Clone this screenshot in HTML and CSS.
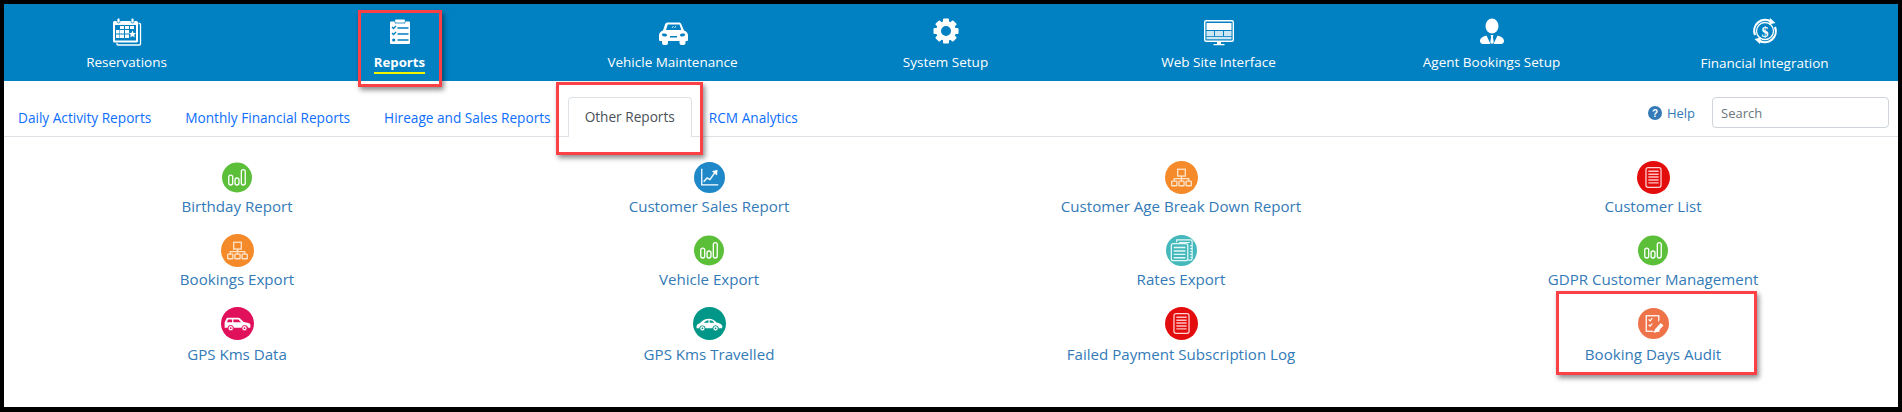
FILE: index.html
```html
<!DOCTYPE html>
<html lang="en">
<head>
<meta charset="utf-8">
<title>Other Reports</title>
<link rel="stylesheet" href="styles.css">
</head>
<body>
<svg class="defs" width="0" height="0" aria-hidden="true">
  <symbol id="i-bars" viewBox="0 0 32 32">
    <circle cx="16" cy="16" r="16" fill="#5bbf3a"/>
    <g fill="none" stroke="#fff" stroke-width="1.400">
      <rect x="7.200" y="13.500" width="4.200" height="10.500" rx="2.100"/>
      <rect x="13.900" y="16.500" width="4.200" height="7.500" rx="2.100"/>
      <rect x="20.600" y="7.500" width="4.200" height="16.500" rx="2.100"/>
    </g>
  </symbol>
  <symbol id="i-org" viewBox="0 0 32 32">
    <circle cx="16" cy="16" r="16" fill="#f58a2b"/>
    <g fill="none" stroke="#fde3c8" stroke-width="1.300">
      <rect x="12.300" y="8" width="7.400" height="6.600"/>
      <rect x="6.500" y="19.500" width="5" height="4.500" rx=".6"/>
      <rect x="13.500" y="19.500" width="5" height="4.500" rx=".6"/>
      <rect x="20.500" y="19.500" width="5" height="4.500" rx=".6"/>
      <path d="M16 14.600v4.900M9 19.500v-2.400h14v2.400"/>
    </g>
  </symbol>
  <symbol id="i-suv" viewBox="0 0 32 32">
    <circle cx="16" cy="16" r="16" fill="#e0105a"/>
    <path fill="#fff" d="M3.500 20v-5l1.800-3.800c.2-.5.600-.7 1.200-.7h10.300c.7 0 1.200.2 1.700.7l3.500 3.300 4.600 1c1 .2 1.900 1 1.900 2V20h-2.200a3.200 3.200 0 0 0-6.200 0H12.500a3.200 3.200 0 0 0-6.200 0z"/>
    <path fill="#e0105a" d="M6.800 12h4v2.800H5.800zM12 12h4.800l2.800 2.800H12z"/>
    <g fill="#fff" stroke="#e0105a" stroke-width=".8"><circle cx="9.400" cy="20.500" r="2.500"/><circle cx="22.800" cy="20.500" r="2.500"/></g>
    <g fill="#e0105a"><circle cx="9.400" cy="20.500" r=".9"/><circle cx="22.800" cy="20.500" r=".9"/></g>
  </symbol>
  <symbol id="i-chart" viewBox="0 0 32 32">
    <circle cx="16" cy="16" r="16" fill="#1f88c9"/>
    <path fill="none" stroke="#fff" stroke-width="1.300" d="M8 7v16.500h17"/>
    <path fill="none" stroke="#e8f4fb" stroke-width="1.600" d="M10 20.500l3.500-4 3 1.500 5-7"/>
    <path fill="#fff" d="M18.500 9.500l5.800-1.500-.5 6z"/>
  </symbol>
  <symbol id="i-car" viewBox="0 0 32 32">
    <circle cx="16" cy="16" r="16" fill="#009688"/>
    <path fill="#fff" d="M3.500 20.500c-.5-2.500.5-4 3-4.800 3-2.700 5.500-4.200 9-4.200 3 0 5.200 1.200 7.300 3.500 2.700.3 5 1.500 5.700 3.500l-.3 2H25a3.200 3.200 0 0 0-6.200 0h-6.600a3.200 3.200 0 0 0-6.200 0z"/>
    <path fill="#009688" d="M10.500 15.300c1.500-1.500 2.800-2.200 4.500-2.400v2.400zM16.200 12.900c2 0 3.300.8 4.500 2.400h-4.500z"/>
    <g fill="#fff" stroke="#009688" stroke-width=".8"><circle cx="9.100" cy="20.700" r="2.500"/><circle cx="21.900" cy="20.700" r="2.500"/></g>
    <g fill="#009688"><circle cx="9.100" cy="20.700" r=".9"/><circle cx="21.900" cy="20.700" r=".9"/></g>
  </symbol>
  <symbol id="i-rates" viewBox="0 0 32 32">
    <circle cx="16" cy="16" r="16" fill="#44b8bb"/>
    <path fill="none" stroke="#e6f7f7" stroke-width="1.200" d="M11 7.500V5h14a2 2 0 0 1 2 2v17a2 2 0 0 1-2 2h-2"/>
    <path stroke="#e6f7f7" stroke-width="1.200" d="M13.500 7.700h11M25 11h2M25 14h2M25 17h2M25 20h2M25 23h2"/>
    <rect x="5.500" y="9" width="17" height="17.500" rx="2" fill="#44b8bb" stroke="#e6f7f7" stroke-width="1.300"/>
    <path stroke="#e6f7f7" stroke-width="1.500" d="M8 13h12M8 16.500h12M8 20h12M8 23.500h12"/>
  </symbol>
  <symbol id="i-list" viewBox="0 0 32 32">
    <circle cx="16" cy="16" r="16" fill="#e30d0d"/>
    <rect x="8.700" y="6.500" width="14.600" height="19" rx="2" fill="none" stroke="#ffd5d5" stroke-width="1.200"/>
    <path stroke="#ffc0c0" stroke-width="1.400" d="M11 10h10M11 12.800h10M11 15.600h10M11 18.400h10M11 21.200h10"/>
  </symbol>
  <symbol id="i-audit" viewBox="0 0 32 32">
    <circle cx="16" cy="16" r="16" fill="#ef7349"/>
    <rect x="8.500" y="8" width="13" height="16" fill="none" stroke="#fff" stroke-width="1.300"/>
    <path fill="none" stroke="#fff" stroke-width="1.200" d="M11 11.800l1.500 1.500 2.300-2.800M11 17.300l1.500 1.500 2.300-2.800"/>
    <path fill="#ef7349" d="M16 19l7-7 4 4-7 8h-5z"/>
    <path fill="#fff" d="M17.500 22l6-6.500 2.800 2.500-6 6.500-3.800 1.200z"/>
  </symbol>
</svg>

<div class="frame">
  <nav class="topnav">
    <div class="topgrid">
      <a class="topitem">
        <svg class="topicon" viewBox="0 0 32 32">
          <path fill="none" stroke="#fff" stroke-width="1.300" d="M27.500 7.500h1a1 1 0 0 1 1 1V28a1 1 0 0 1-1 1H7a1 1 0 0 1-1-1v-1"/>
          <rect x="2" y="5" width="25" height="21.500" rx="1.500" fill="#fff"/>
          <rect x="4" y="9" width="21" height="15.500" fill="#0180c2"/>
          <g fill="#fff"><rect x="9" y="10" width="4" height="3"/><rect x="14" y="10" width="4" height="3"/><rect x="19" y="10" width="4" height="3"/><rect x="5" y="14" width="3.500" height="3.500"/><rect x="9" y="14" width="4" height="3.500"/><rect x="14" y="14" width="4" height="3.500"/><rect x="5" y="18.500" width="3.500" height="3.500"/><rect x="9" y="18.500" width="4" height="3.500"/><rect x="14" y="18.500" width="4" height="3.500"/><path d="M21.500 14.500l1.100 2.400 2.400.2-1.800 1.700.6 2.600-2.300-1.300-2.300 1.300.6-2.600-1.800-1.700 2.400-.2z"/></g>
          <g fill="#fff" stroke="#0180c2" stroke-width=".8"><rect x="6" y="2" width="3" height="5" rx="1.500"/><rect x="20" y="2" width="3" height="5" rx="1.500"/></g>
        </svg>
        <span class="toplabel">Reservations</span>
      </a>
      <a class="topitem active">
        <svg class="topicon" viewBox="0 0 32 32">
          <path fill="#fff" d="M6 6.500a1 1 0 0 1 1-1h4V4.500a1 1 0 0 1 1-1h8a1 1 0 0 1 1 1v1h4a1 1 0 0 1 1 1V27a1 1 0 0 1-1 1H7a1 1 0 0 1-1-1z"/>
          <path fill="none" stroke="#0180c2" stroke-width=".8" d="M11 5.500v1.500h10V5.500"/>
          <path fill="none" stroke="#0180c2" stroke-width="1.300" d="M8 11l1.500 1.500L12 10M8 17l1.500 1.500L12 16"/>
          <path stroke="#0180c2" stroke-width="1.300" d="M13.500 12h11M13.500 18h11M13.500 24h11"/>
          <circle cx="9.700" cy="24" r="1.600" fill="#0180c2"/>
        </svg>
        <span class="toplabel">Reports</span>
      </a>
      <a class="topitem">
        <svg class="topicon" viewBox="0 0 32 32">
          <path fill="#fff" fill-rule="evenodd" d="M8 8.500C8.600 7 9.500 6.500 11 6.500h10.500c1.500 0 2.400.5 3 2L27 14.500c2.500 1 4 2.500 4 5v4.500a1 1 0 0 1-1 1h-1.500V27a2 2 0 0 1-2 2h-2a2 2 0 0 1-2-2v-2H11V27a2 2 0 0 1-2 2H7a2 2 0 0 1-2-2v-2H3a1 1 0 0 1-1-1v-4.500c0-2.500 1.500-4 4-5zM10.800 8.500L9 14h15.300l-1.800-5.500zM5 18.500c0 1 1 2 2.500 2s2.500-.5 2.500-1.500-1.500-1.500-3-1.500-2 0-2 1zm23 0c0-1-.5-1-2-1s-3 .5-3 1.500 1 1.500 2.500 1.500 2.500-1 2.500-2zM13 20h7v1.500h-7z"/>
          <path stroke="#fff" stroke-width=".8" d="M15 12l1.500-2M17.500 12l1.500-2"/>
        </svg>
        <span class="toplabel">Vehicle Maintenance</span>
      </a>
      <a class="topitem">
        <svg class="topicon" viewBox="0 0 32 32">
          <circle cx="16" cy="15" r="7.500" fill="none" stroke="#fff" stroke-width="5"/>
          <g fill="#fff">
            <rect x="13" y="2.500" width="6" height="5" rx="1"/>
            <rect x="13" y="22.500" width="6" height="5" rx="1"/>
            <rect x="3.500" y="12" width="5" height="6" rx="1"/>
            <rect x="23.500" y="12" width="5" height="6" rx="1"/>
            <rect x="13" y="2.500" width="6" height="5" rx="1" transform="rotate(45 16 15)"/>
            <rect x="13" y="2.500" width="6" height="5" rx="1" transform="rotate(135 16 15)"/>
            <rect x="13" y="2.500" width="6" height="5" rx="1" transform="rotate(225 16 15)"/>
            <rect x="13" y="2.500" width="6" height="5" rx="1" transform="rotate(315 16 15)"/>
          </g>
        </svg>
        <span class="toplabel">System Setup</span>
      </a>
      <a class="topitem">
        <svg class="topicon" viewBox="0 0 32 32">
          <rect x="1.700" y="4.700" width="28.600" height="20.600" rx="1.500" fill="none" stroke="#fff" stroke-width="1.400"/>
          <rect x="3.500" y="7" width="25" height="7" fill="#fff"/>
          <g fill="#cfe6f3"><rect x="3.500" y="15" width="7.500" height="5"/><rect x="12" y="15" width="8" height="5"/><rect x="21" y="15" width="7.500" height="5"/><rect x="3.500" y="20.800" width="25" height="2.500"/></g>
          <path fill="#fff" d="M14 25.500h4v2.500h3.500v1.200h-11V28H14z"/>
        </svg>
        <span class="toplabel">Web Site Interface</span>
      </a>
      <a class="topitem">
        <svg class="topicon" viewBox="0 0 32 32">
          <ellipse cx="16" cy="10" rx="6.500" ry="7.500" fill="#fff"/>
          <path fill="#fff" d="M10.500 19.500c-3.500 1-6.500 2.600-6.500 5.500 0 2 1.500 3 3 3h18c1.500 0 3-1 3-3 0-2.900-3-4.500-6.500-5.500L17.500 28h-3z"/>
          <path fill="#fff" d="M14.500 19h3l-.6 2 .9 5.500-1.800 1.500-1.800-1.500.9-5.500z"/>
        </svg>
        <span class="toplabel">Agent Bookings Setup</span>
      </a>
      <a class="topitem finance">
        <svg class="topicon" viewBox="0 0 32 32">
          <circle cx="16" cy="15" r="8.500" fill="none" stroke="#fff" stroke-width="1.300"/>
          <text class="dollar" x="16" y="21">$</text>
          <path fill="none" stroke="#fff" stroke-width="2.200" d="M6 19A11 11 0 0 1 22 5.500M26 11A11 11 0 0 1 10 24.500"/>
          <path fill="#fff" d="M21 2l5.500 5-6.500 1.500zM11 28l-5.500-5L12 21.500z"/>
        </svg>
        <span class="toplabel">Financial Integration</span>
      </a>
    </div>
  </nav>

  <div class="tabbar">
    <ul class="tabs">
      <li class="tab">Daily Activity Reports</li>
      <li class="tab">Monthly Financial Reports</li>
      <li class="tab">Hireage and Sales Reports</li>
      <li class="tab current">Other Reports</li>
      <li class="tab">RCM Analytics</li>
    </ul>
    <div class="tools">
      <a class="help">
        <svg class="helpicon" viewBox="0 0 14 14"><circle cx="7" cy="7" r="7" fill="#337ab7"/><text class="qmark" x="7" y="10.600">?</text></svg>
        Help
      </a>
      <input class="search" type="text" placeholder="Search">
    </div>
  </div>

  <div class="reports">
    <a class="report"><svg class="ric w29"><use href="#i-bars"/></svg><span>Birthday Report</span></a>
    <a class="report"><svg class="ric w31"><use href="#i-chart"/></svg><span>Customer Sales Report</span></a>
    <a class="report"><svg class="ric w33"><use href="#i-org"/></svg><span>Customer Age Break Down Report</span></a>
    <a class="report"><svg class="ric w33"><use href="#i-list"/></svg><span>Customer List</span></a>
    <a class="report"><svg class="ric w33"><use href="#i-org"/></svg><span>Bookings Export</span></a>
    <a class="report"><svg class="ric w29"><use href="#i-bars"/></svg><span>Vehicle Export</span></a>
    <a class="report"><svg class="ric w31"><use href="#i-rates"/></svg><span>Rates Export</span></a>
    <a class="report"><svg class="ric w29"><use href="#i-bars"/></svg><span>GDPR Customer Management</span></a>
    <a class="report last"><svg class="ric w33"><use href="#i-suv"/></svg><span>GPS Kms Data</span></a>
    <a class="report last"><svg class="ric w33"><use href="#i-car"/></svg><span>GPS Kms Travelled</span></a>
    <a class="report last"><svg class="ric w33"><use href="#i-list"/></svg><span>Failed Payment Subscription Log</span></a>
    <a class="report last"><svg class="ric w31"><use href="#i-audit"/></svg><span>Booking Days Audit</span></a>
  </div>

  <div class="mark mark-reports"></div>
  <div class="mark mark-other"></div>
  <div class="mark mark-audit"></div>
</div>
</body>
</html>
```
FILE: styles.css
```css
* { box-sizing: border-box; }
html, body { margin: 0; height: 100%; background: #000; }
body { padding: 4px 4px 5px; font-family: "Open Sans", "Noto Sans", sans-serif; overflow: hidden; }
.defs { position: absolute; }
.frame { position: relative; height: 403px; background: #fff; overflow: hidden; }

.topnav { height: 77px; background: #0180c2; overflow: hidden; }
.topgrid { display: grid; grid-template-columns: repeat(7, 273px); margin-left: -14px; }
.topitem { display: flex; flex-direction: column; align-items: center; padding-top: 12px; color: #fff; font-size: 13.500px; }
.active { font-size: 13.200px; }
.topicon { display: block; width: 32px; height: 32px; }
.toplabel { line-height: 18px; margin-top: 5px; padding-bottom: 1px; border-bottom: 2px solid transparent; }
.active .toplabel { font-weight: 700; border-bottom-color: #f2f500; }
.finance .toplabel { margin-top: 6px; }
.dollar { font: 700 14px "Liberation Serif", serif; fill: #fff; text-anchor: middle; }

.tabbar { display: flex; justify-content: space-between; height: 56px; border-bottom: 1px solid #dee2e6; padding: 16px 9px 0 0; }
.tabs { display: flex; list-style: none; margin: 0 0 -1px -3px; padding: 0; align-items: flex-end; height: 40px; }
.tab { height: 39px; padding: 0 16px; margin: 0; border: 1px solid transparent; border-bottom: 0; color: #0d6efd; font-size: 13.650px; line-height: 38px; }
.tab.current { color: #495057; border-color: #dee2e6; border-radius: 4px 4px 0 0; background: #fff; height: 40px; }
.tools { display: flex; align-items: flex-start; color: #337ab7; font-size: 13px; }
.help { display: flex; align-items: center; gap: 5px; height: 31px; margin-right: 17px; }
.helpicon { width: 14px; height: 14px; }
.qmark { font: 700 10px "Liberation Sans", sans-serif; fill: #fff; text-anchor: middle; }
.search { width: 177px; height: 31px; border: 1px solid #ced4da; border-radius: 4px; padding: 0 8px; font: 13px "Open Sans", sans-serif; color: #495057; background: #fff; }
.search::placeholder { color: #6c757d; opacity: 1; }

.reports { display: grid; grid-template-columns: repeat(4, 472px); margin-left: -3px; padding-top: 24px; }
.report { display: flex; flex-direction: column; align-items: center; height: 73px; color: #337ab7; font-size: 15.100px; }
.report span { line-height: 20px; margin-top: 2px; }
.report.last span { margin-top: 4px; }
.ric { display: block; width: 33px; height: 33px; }
.w29 { width: 30px; height: 33px; }
.w31 { width: 31px; height: 33px; }

.mark { position: absolute; border: 3px solid #fb4145; box-shadow: 2px 3px 5px rgba(0, 0, 0, .45); pointer-events: none; }
.mark-reports { left: 354px; top: 6px; width: 84px; height: 77px; }
.mark-other { left: 552px; top: 78px; width: 147px; height: 73px; }
.mark-audit { left: 1552px; top: 287px; width: 201px; height: 84px; }
```
